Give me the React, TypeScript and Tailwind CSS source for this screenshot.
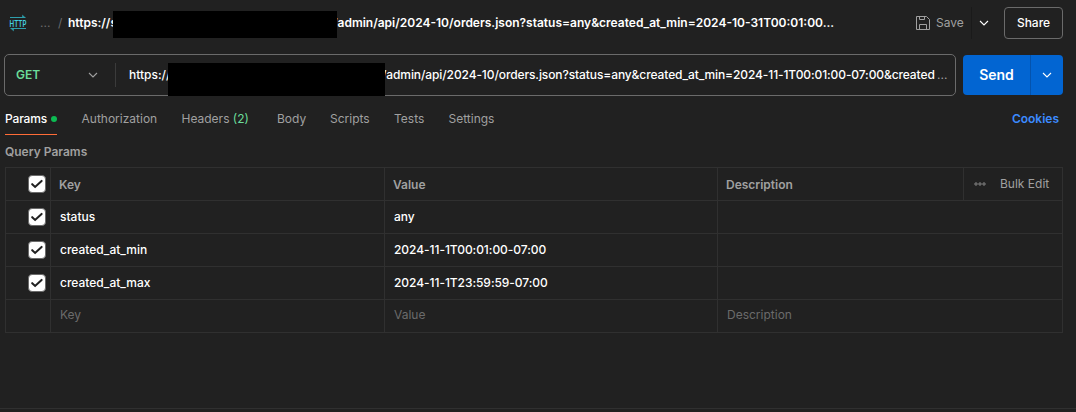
import React from 'react';

type Param = { key: string; value: string };

const params: Param[] = [
  { key: 'status', value: 'any' },
  { key: 'created_at_min', value: '2024-11-1T00:01:00-07:00' },
  { key: 'created_at_max', value: '2024-11-1T23:59:59-07:00' },
];

function HttpIcon() {
  return (
    <svg width="18" height="18" viewBox="0 0 18 18" fill="none" stroke="#2e9fac" className="shrink-0 overflow-visible">
      <path d="M1 3.500h15.500M17 14.500H1.500" strokeWidth="1.200" />
      <path d="M13.500 1.200 16 3.500h-2.500zM4.500 16.800 2 14.500h2.500z" fill="#2e9fac" strokeWidth="0.6" />
      <text x="0.6" y="12.500" textLength="16.800" lengthAdjust="spacingAndGlyphs" fontSize="9.600" fontWeight="600" fill="#45cfe0" stroke="none" className="font-['Inter',sans-serif]">
        HTTP
      </text>
    </svg>
  );
}

function Chevron({ className }: { className: string }) {
  return (
    <svg width="10" height="6" viewBox="0 0 10 6" fill="none" stroke="currentColor" strokeWidth="1.1" className={className}>
      <path d="M1 1l4 4 4-4" />
    </svg>
  );
}

function SaveIcon() {
  return (
    <svg width="16" height="16" viewBox="0 0 16 16" fill="none" stroke="#a0a0a0" className="shrink-0">
      <path d="M1.500 1.500h10l3 3v10h-13z" strokeLinejoin="round" />
      <path d="M4.500 1.500v3h5v-3M4.500 14.500v-5h7v5" />
    </svg>
  );
}

function Checkbox() {
  return (
    <span className="flex h-[18px] w-[18px] items-center justify-center rounded-[4px] border border-[#6b6b6b] bg-white">
      <svg width="16" height="16" viewBox="0 0 16 16" fill="none" stroke="#212121" strokeWidth="2.1" strokeLinecap="round">
        <path d="M3.200 8.200l2.900 2.700 6.500-6" />
      </svg>
    </span>
  );
}

function Tab({ className, children }: { className: string; children: React.ReactNode }) {
  return <div className={`shrink-0 whitespace-nowrap text-[#a0a0a0] ${className}`}>{children}</div>;
}

export default function App() {
  return (
    <div className="flex h-[412px] w-[1076px] flex-col overflow-hidden bg-[#212121] font-['Inter',sans-serif] text-[12px] leading-4 text-white">
      <header className="flex h-[46px] shrink-0 items-center pl-[9px] pr-[13px]">
        <HttpIcon />
        <span className="ml-[13px] w-[18px] text-[#6b6b6b]">...</span>
        <span className="w-[10px] text-[#6b6b6b]">/</span>
        <span className="w-[45px] whitespace-nowrap font-semibold">https://s</span>
        <span className="relative z-10 mt-[3px] h-[27px] w-[224px] shrink-0 bg-black" />
        <span className="-ml-1 w-[583px] whitespace-nowrap font-semibold">
          /admin/api/2024-10/orders.json?status=any&amp;created_at_min=2024-10-31T00:01:00...
        </span>
        <SaveIcon />
        <span className="ml-[5px] w-[35px] text-[#a0a0a0]">Save</span>
        <div className="flex h-8 w-[33px] items-center justify-start border-l border-[#1a1a1a] pl-[7px]">
          <Chevron className="text-white" />
        </div>
        <button className="flex h-8 w-[59px] shrink-0 items-center justify-center rounded-[4px] border border-[#6b6b6b] font-medium">Share</button>
      </header>

      <div className="flex shrink-0 items-center pl-1 pr-[13px] pt-2">
        <div className="flex h-[42px] w-[952px] items-center rounded-[5px] border border-[#6b6b6b] pl-[11px]">
          <span className="w-[72px] font-semibold text-[#6bdd9a]">GET</span>
          <Chevron className="text-[#a0a0a0]" />
          <span className="ml-[17px] h-6 w-px bg-[#3b3b3b]" />
          <span className="-mt-px ml-[13px] w-[39px] whitespace-nowrap font-medium">https://</span>
          <span className="relative z-10 mt-[8px] h-[33px] w-[217px] shrink-0 self-start bg-black" />
          <span className="-ml-[3px] -mt-px w-[555px] whitespace-nowrap font-medium tracking-[-0.1px]">
            /admin/api/2024-10/orders.json?status=any&amp;created_at_min=2024-11-1T00:01:00-07:00&amp;created
          </span>
          <span className="-mt-px text-[#a0a0a0]">...</span>
        </div>
        <div className="ml-[7px] flex h-10 w-[100px] overflow-hidden rounded-[4px] bg-[#0265d2]">
          <button className="w-[67px] text-[14px] font-semibold">Send</button>
          <button className="flex w-[33px] items-center justify-center border-l border-[#0453ad]">
            <Chevron className="text-white" />
          </button>
        </div>
      </div>

      <nav className="flex h-[39px] shrink-0 items-start pl-[5px] pr-[17px]">
        <div className="flex h-[39px] w-[52px] items-start justify-between border-b border-[#ff6c37] pt-[15px] font-medium tracking-[-0.15px]">
          Params
          <span className="mt-[5px] h-[6px] w-[6px] rounded-full bg-[#0cbb52]" />
        </div>
        <div className="flex flex-1 pt-[15px]">
          <Tab className="ml-6 w-[100px] pl-[0.5px]">Authorization</Tab>
          <Tab className="w-24 pl-[0.5px]">Headers <span className="text-[#6bdd9a]">(2)</span></Tab>
          <Tab className="w-[53px]">Body</Tab>
          <Tab className="w-16">Scripts</Tab>
          <Tab className="w-[54px]">Tests</Tab>
          <Tab className="w-16 pl-[0.5px]">Settings</Tab>
        </div>
        <a className="pt-[15px] font-semibold text-[#3c8bff]">Cookies</a>
      </nav>

      <h2 className="h-[32px] shrink-0 pl-[5px] pt-[9px] font-semibold text-[#a0a0a0]">Query Params</h2>

      <div className="ml-[5px] grid w-[1058px] shrink-0 grid-cols-[45px_334px_333px_246px_100px] grid-rows-5 border-l border-t border-[#303030] *:h-[33px] *:border-b *:border-[#303030]">
        <div className="flex items-center border-r pl-[22px]"><Checkbox /></div>
        <div className="flex items-center border-r pl-2 pt-px font-semibold text-[#a0a0a0]">Key</div>
        <div className="flex items-center border-r pl-2 pt-px font-semibold text-[#a0a0a0]">Value</div>
        <div className="flex items-center border-r pl-2 pt-px font-semibold text-[#a0a0a0]">Description</div>
        <div className="-ml-px flex w-[100px] items-center border-r pl-[11px] text-[#a0a0a0]">
          <svg width="12" height="6" viewBox="0 0 12 6" fill="none" stroke="#a0a0a0" strokeWidth="0.8">
            <circle cx="2" cy="3" r="1.200" /><circle cx="6" cy="3" r="1.200" /><circle cx="10" cy="3" r="1.200" />
          </svg>
          <span className="ml-[14px] whitespace-nowrap">Bulk Edit</span>
        </div>
        {params.map((p) => (
          <React.Fragment key={p.key}>
            <div className="flex items-center border-r pl-[22px]"><Checkbox /></div>
            <div className="flex items-center border-r pl-[9px] font-medium">{p.key}</div>
            <div className="flex items-center border-r pl-[9px] font-medium tracking-[-0.05px]">{p.value}</div>
            <div className="col-span-2 mr-px border-r" />
          </React.Fragment>
        ))}
        <div className="border-r" />
        <div className="flex items-center border-r pb-[2px] pl-[9px] text-[#6b6b6b]">Key</div>
        <div className="flex items-center border-r pb-[2px] pl-[9px] text-[#6b6b6b]">Value</div>
        <div className="col-span-2 mr-px flex items-center border-r pb-[2px] pl-[9px] text-[#6b6b6b]">Description</div>
      </div>

      <footer className="mt-auto h-1 shrink-0 border-t border-[#303030]" />
    </div>
  );
}
